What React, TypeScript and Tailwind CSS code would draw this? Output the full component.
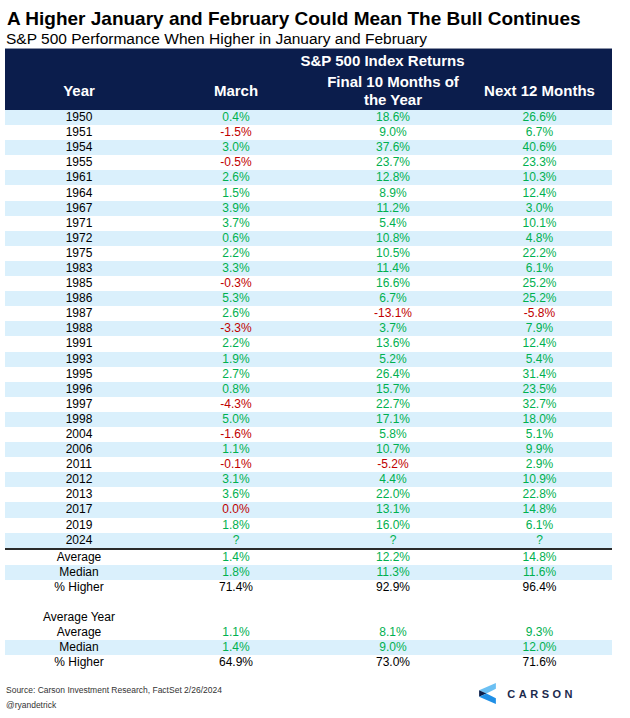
const rows: [string, string, string, string][] = [
  ["1950", "0.4%", "18.6%", "26.6%"],
  ["1951", "-1.5%", "9.0%", "6.7%"],
  ["1954", "3.0%", "37.6%", "40.6%"],
  ["1955", "-0.5%", "23.7%", "23.3%"],
  ["1961", "2.6%", "12.8%", "10.3%"],
  ["1964", "1.5%", "8.9%", "12.4%"],
  ["1967", "3.9%", "11.2%", "3.0%"],
  ["1971", "3.7%", "5.4%", "10.1%"],
  ["1972", "0.6%", "10.8%", "4.8%"],
  ["1975", "2.2%", "10.5%", "22.2%"],
  ["1983", "3.3%", "11.4%", "6.1%"],
  ["1985", "-0.3%", "16.6%", "25.2%"],
  ["1986", "5.3%", "6.7%", "25.2%"],
  ["1987", "2.6%", "-13.1%", "-5.8%"],
  ["1988", "-3.3%", "3.7%", "7.9%"],
  ["1991", "2.2%", "13.6%", "12.4%"],
  ["1993", "1.9%", "5.2%", "5.4%"],
  ["1995", "2.7%", "26.4%", "31.4%"],
  ["1996", "0.8%", "15.7%", "23.5%"],
  ["1997", "-4.3%", "22.7%", "32.7%"],
  ["1998", "5.0%", "17.1%", "18.0%"],
  ["2004", "-1.6%", "5.8%", "5.1%"],
  ["2006", "1.1%", "10.7%", "9.9%"],
  ["2011", "-0.1%", "-5.2%", "2.9%"],
  ["2012", "3.1%", "4.4%", "10.9%"],
  ["2013", "3.6%", "22.0%", "22.8%"],
  ["2017", "0.0%", "13.1%", "14.8%"],
  ["2019", "1.8%", "16.0%", "6.1%"],
  ["2024", "?", "?", "?"],
];

// values that the source sheet colours red
const isRed = (v: string) => v.startsWith("-") || v === "0.0%";

const cols = "grid grid-cols-[148px_166px_148px_145px]";

interface RowProps {
  cells: string[];
  shaded?: boolean;
  plain?: boolean;
}

const Row = ({ cells, shaded, plain }: RowProps) => (
  <div className={`${cols} h-[15.1px] items-center text-[12px] leading-[15px] ${shaded ? "bg-[#daf0fc]" : "bg-white"}`}>
    {cells.map((c, i) => (
      <div
        key={i}
        className={`text-center ${
          i === 0 || plain ? "text-black" : isRed(c) ? "text-[#c00000]" : "text-[#00b050]"
        }`}
      >
        {c}
      </div>
    ))}
  </div>
);

const CarsonLogo = () => (
  <div className="flex items-center gap-[11px]">
    <svg width="17" height="21" viewBox="0 0 16 20">
      <polygon points="16,0 16,5.5 7,10 0,7" fill="#6cc0f3" />
      <polygon points="0,7 7,10 0,13" fill="#0b1e4b" />
      <polygon points="0,13 7,10 16,14.5 16,20" fill="#1f8fe6" />
    </svg>
    <span className="text-[11px] font-semibold tracking-[3.5px] text-[#1c2a4d]">CARSON</span>
  </div>
);

export default function App() {
  return (
    <div className="w-[630px] h-[718px] bg-white text-black font-['Liberation_Sans',Arial,sans-serif]">
      <h1 className="pl-[7px] pt-[7px] text-[19px] font-bold leading-[23px]">
        A Higher January and February Could Mean The Bull Continues
      </h1>
      <p className="pl-[6px] text-[15.5px] leading-[18px]">
        S&amp;P 500 Performance When Higher in January and February
      </p>

      <div className="ml-[5px] w-[607px]">
        {/* Header */}
        <div className={`${cols} grid-rows-[23px_38px] bg-[#0b1d4c] text-white font-bold text-[15px] leading-[18px] border-t border-[#8c93a8]`}>
          <div />
          <div className="col-span-3 flex items-center justify-center">S&amp;P 500 Index Returns</div>
          <div className="flex items-center justify-center">Year</div>
          <div className="flex items-center justify-center">March</div>
          <div className="flex flex-col items-center justify-center">
            <span>Final 10 Months of</span>
            <span>the Year</span>
          </div>
          <div className="flex items-center justify-center">Next 12 Months</div>
        </div>

        {rows.map((r, i) => (
          <Row key={r[0]} cells={r} shaded={i % 2 === 0} />
        ))}

        <div className="h-[2px] bg-[#2b2b2b]" />

        <Row cells={["Average", "1.4%", "12.2%", "14.8%"]} />
        <Row cells={["Median", "1.8%", "11.3%", "11.6%"]} shaded />
        <Row cells={["% Higher", "71.4%", "92.9%", "96.4%"]} plain />
        <div className="h-[15.1px]" />
        <Row cells={["Average Year", "", "", ""]} plain />
        <Row cells={["Average", "1.1%", "8.1%", "9.3%"]} />
        <Row cells={["Median", "1.4%", "9.0%", "12.0%"]} shaded />
        <Row cells={["% Higher", "64.9%", "73.0%", "71.6%"]} plain />
      </div>

      {/* Footer */}
      <div className="mt-[13px] flex items-start justify-between pl-[6px] pr-[54px]">
        <div className="text-[8.5px] leading-[15px] text-[#333]">
          <div>Source: Carson Investment Research, FactSet 2/26/2024</div>
          <div>@ryandetrick</div>
        </div>
        <CarsonLogo />
      </div>
    </div>
  );
}
